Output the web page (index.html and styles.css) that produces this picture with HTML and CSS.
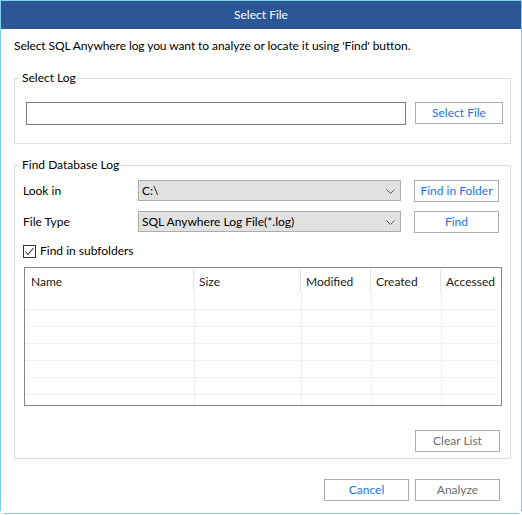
FILE: index.html
```html
<!DOCTYPE html>
<html lang="en">
<head>
<meta charset="utf-8">
<title>Select File</title>
<link rel="stylesheet" href="styles.css">
</head>
<body>
<div class="window">
  <div class="titlebar">Select File</div>
  <div class="content">
    <p class="intro">Select SQL Anywhere log you want to analyze or locate it using 'Find' button.</p>

    <fieldset class="group group-log">
      <legend>Select Log</legend>
      <div class="log-row">
        <input class="path-input" type="text" aria-label="Log path">
        <button class="btn btn-select">Select File</button>
      </div>
    </fieldset>

    <fieldset class="group group-find">
      <legend>Find Database Log</legend>
      <div class="find-body">
        <div class="form-row">
          <span class="field-label">Look in</span>
          <div class="combo">
            <span class="combo-text">C:\</span>
            <svg class="chevron" width="9" height="5" viewBox="0 0 9 5"><polyline points="0.5,0.5 4.5,4.5 8.5,0.5" fill="none" stroke="#5a5a5a" stroke-width="1"/></svg>
          </div>
          <button class="btn btn-side">Find in Folder</button>
        </div>
        <div class="form-row row-type">
          <span class="field-label">File Type</span>
          <div class="combo">
            <span class="combo-text">SQL Anywhere Log File(*.log)</span>
            <svg class="chevron" width="9" height="5" viewBox="0 0 9 5"><polyline points="0.5,0.5 4.5,4.5 8.5,0.5" fill="none" stroke="#5a5a5a" stroke-width="1"/></svg>
          </div>
          <button class="btn btn-side">Find</button>
        </div>
        <label class="check-row">
          <span class="check-box">
            <svg width="11" height="11" viewBox="0 0 11 11"><polyline points="1.5,5.5 4,8.5 9.5,2" fill="none" stroke="#333" stroke-width="1.1"/></svg>
          </span>
          <span>Find in subfolders</span>
        </label>

        <div class="list">
          <div class="list-head">
            <div class="hcell c1">Name</div>
            <div class="hcell">Size</div>
            <div class="hcell">Modified</div>
            <div class="hcell">Created</div>
            <div class="hcell last">Accessed</div>
          </div>
          <div class="list-row"><div class="cell c1"></div><div class="cell"></div><div class="cell"></div><div class="cell"></div><div class="cell"></div></div>
          <div class="list-row"><div class="cell c1"></div><div class="cell"></div><div class="cell"></div><div class="cell"></div><div class="cell"></div></div>
          <div class="list-row"><div class="cell c1"></div><div class="cell"></div><div class="cell"></div><div class="cell"></div><div class="cell"></div></div>
          <div class="list-row"><div class="cell c1"></div><div class="cell"></div><div class="cell"></div><div class="cell"></div><div class="cell"></div></div>
          <div class="list-row"><div class="cell c1"></div><div class="cell"></div><div class="cell"></div><div class="cell"></div><div class="cell"></div></div>
          <div class="list-row"><div class="cell c1"></div><div class="cell"></div><div class="cell"></div><div class="cell"></div><div class="cell"></div></div>
          <div class="list-row partial"><div class="cell c1"></div><div class="cell"></div><div class="cell"></div><div class="cell"></div><div class="cell"></div></div>
        </div>

        <div class="clear-row">
          <button class="btn btn-side btn-disabled">Clear List</button>
        </div>
      </div>
    </fieldset>

    <div class="footer">
      <button class="btn btn-side">Cancel</button>
      <button class="btn btn-side btn-disabled">Analyze</button>
    </div>
  </div>
</div>
<div class="bottom-line"></div>
</body>
</html>
```

FILE: styles.css
```css
* {
  box-sizing: border-box;
}

html, body {
  margin: 0;
  padding: 0;
  background: #ffffff;
}

body {
  width: 522px;
  height: 515px;
  overflow: hidden;
  font-family: Lato, "Noto Sans", "Liberation Sans", sans-serif;
  font-size: 12px;
  color: #000000;
}

.window {
  width: 522px;
  height: 511px;
  border: 1px solid #82cdee;
  border-bottom: none;
  overflow: hidden;
}

.titlebar {
  height: 28px;
  margin: 0 -1px;
  background: #2b5797;
  color: #ffffff;
  text-align: center;
  line-height: 28px;
  font-size: 12px;
}

.content {
  padding: 9px 10px 0 13px;
}

.intro {
  margin: 0;
  line-height: 16px;
  height: 16px;
  letter-spacing: -0.08px;
}

.group {
  margin: 16px 0 0 0;
  border: 1px solid #dcdcdc;
  padding: 0 0 0 5px;
  min-width: 0;
}

.group legend {
  padding: 0 1px 0 2px;
  line-height: 16px;
  font-size: 12px;
}

.group-log {
  padding-top: 16px;
  padding-bottom: 18px;
  padding-right: 7px;
}

.log-row {
  display: flex;
  align-items: flex-start;
  gap: 9px;
  padding-left: 6px;
}

.path-input {
  width: 380px;
  height: 23px;
  margin: 0;
  border: 1px solid #7a7a7a;
  background: #ffffff;
  padding: 0 3px;
  font: inherit;
  outline: none;
}

.btn {
  height: 22px;
  margin: 0;
  padding: 0;
  border: 1px solid #adadad;
  background: #ffffff;
  color: #1a76e4;
  font-family: inherit;
  font-size: 12px;
  line-height: 20px;
  text-align: center;
}

.btn-select {
  width: 88px;
}

.btn-side {
  width: 85px;
}

.btn-disabled {
  color: #6d6d6d;
}

.group-find {
  margin-top: 13px;
  padding-top: 7px;
  padding-bottom: 6px;
  padding-right: 8px;
}

.find-body {
  padding-left: 4px;
  display: flex;
  flex-direction: column;
}

.form-row {
  display: flex;
  align-items: flex-start;
  height: 22px;
}

.row-type {
  margin-top: 9px;
}

.field-label {
  width: 115px;
  margin-left: -1px;
  padding-right: 1px;
  line-height: 21px;
  flex: none;
}

.combo {
  width: 263px;
  height: 21px;
  flex: none;
  display: flex;
  align-items: center;
  justify-content: space-between;
  background: #e1e1e1;
  border: 1px solid #adadad;
  padding: 0 5px 0 3px;
}

.combo-text {
  line-height: 19px;
}

.chevron {
  display: block;
  margin-top: 1px;
}

.form-row .btn-side {
  margin-left: 13px;
}

.check-row {
  display: flex;
  align-items: center;
  gap: 4px;
  height: 16px;
  margin-top: 10px;
  margin-left: -1px;
  line-height: 16px;
}

.check-box {
  width: 13px;
  height: 13px;
  border: 1px solid #333333;
  display: flex;
  align-items: center;
  justify-content: center;
  background: #ffffff;
}

.check-box svg {
  display: block;
}

.list {
  margin-top: 8px;
  width: 478px;
  height: 139px;
  border: 1px solid #828790;
  overflow: hidden;
  background: #ffffff;
}

.list-head,
.list-row {
  display: grid;
  grid-template-columns: 169px 107px 70px 70px 58px;
}

.list-head {
  height: 25px;
}

.hcell {
  padding: 1px 0 0 5px;
  line-height: 23px;
  border-right: 1px solid #e5e5e5;
  margin: 1px 0 0 0;
  height: 24px;
  color: #1b1b1b;
  white-space: nowrap;
  overflow: hidden;
}

.hcell.c1 {
  padding-left: 6px;
}

.hcell.last {
  border-right: none;
}

.list-row {
  height: 17px;
}

.list-row.partial {
  height: 11px;
}

.cell {
  border-bottom: 1px solid #f0f0f0;
  border-left: 1px solid #f0f0f0;
}

.cell.c1 {
  border-left: none;
}

.list-row.partial .cell {
  border-bottom: none;
}

.clear-row {
  display: flex;
  justify-content: flex-end;
  margin-top: 24px;
  padding-right: 2px;
}

.footer {
  display: flex;
  justify-content: flex-end;
  gap: 6px;
  margin-top: 20px;
  padding-right: 11px;
}

.bottom-line {
  height: 1px;
  margin: 2px 3px 0 4px;
  background: #82cdee;
}
```
